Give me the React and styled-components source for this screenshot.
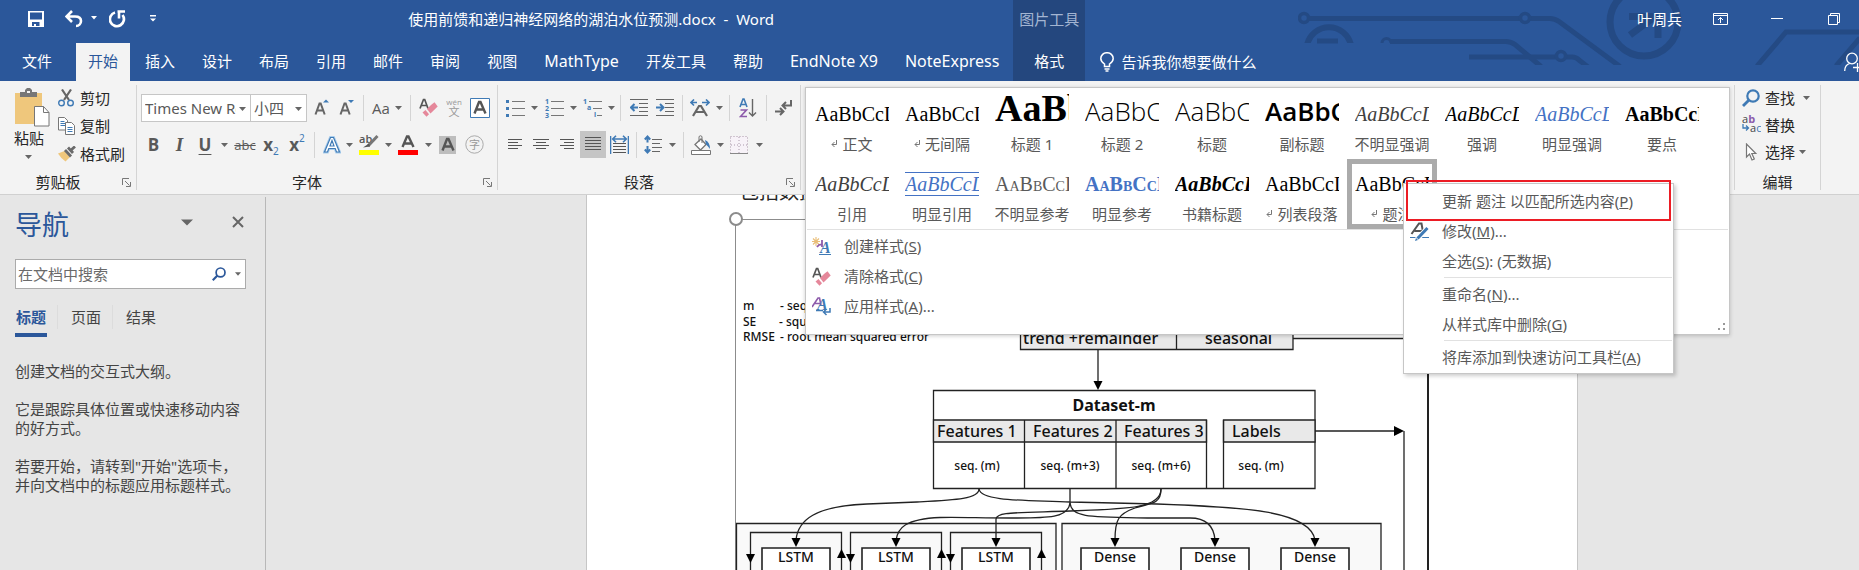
import React from "react";
import styled, { createGlobalStyle, css } from "styled-components";

const ui = '"Noto Sans", "Noto Sans CJK SC", sans-serif';
const display = '"Open Sans", "Noto Sans CJK SC", sans-serif';
const serif = '"Liberation Serif", "Noto Sans CJK SC", serif';
const blue = "#2b579a";
const ink = "#262626";
const grey = "#595959";
const accent = "#3f7ab5";
const line = "#c6c6c6";

const GlobalStyle = createGlobalStyle`
  *, *::before, *::after { box-sizing: border-box; }
  body { margin: 0; font: 15px/20px ${ui}; color: ${ink}; }
  button, input, select { font: inherit; color: inherit; margin: 0; padding: 0; border: 0; background: none; border-radius: 0; }
  p, h1, h2 { margin: 0; font-weight: normal; }
  ul { margin: 0; padding: 0; list-style: none; }
  svg { display: block; flex: none; }
`;

const Shell = styled.div`
  display: flex;
  flex-direction: column;
  height: 100vh;
  overflow: hidden;
  background: #e6e6e6;
`;

/* ---------- header ---------- */

const Header = styled.header`
  position: relative;
  display: grid;
  grid-template-columns: max-content 72px 1fr;
  grid-template-rows: 43px 38px;
  background: ${blue};
  color: #fff;
  overflow: hidden;
  flex: none;
`;

const Decor = styled.svg`
  position: absolute;
  top: 0;
  right: 0;
`;

const TitleRow = styled.div`
  display: flex;
  align-items: center;
  padding: 0 0 6px 15px;
`;

const DocTitle = styled.h1`
  flex: 1;
  padding-right: 6px;
  text-align: center;
  font-size: 15px;
  white-space: pre;
`;

const ContextHeading = styled.div`
  display: flex;
  align-items: center;
  justify-content: center;
  padding-bottom: 6px;
  background: #24477e;
  color: #a3b5d2;
`;

const WindowRow = styled.div`
  position: relative;
  display: flex;
  align-items: center;
  justify-content: flex-end;
  gap: 7px;
  padding-bottom: 6px;
`;

const UserName = styled.button`
  margin-right: 6px;
`;

const WindowButton = styled.button`
  display: flex;
  justify-content: center;
  width: 50px;
`;

const Tabs = styled.nav`
  display: flex;
  gap: 3px;
  padding-right: 2px;
`;

const Tab = styled.button`
  padding: 0 12px 3px;
  font-size: ${(p) => (p.$latin ? 16 : 15)}px;
  line-height: 34px;
  white-space: nowrap;
  ${(p) => p.$file && css`padding: 0 21px 3px 22px;`}
  ${(p) => p.$active && css`background: #f3f3f3; color: ${blue};`}
  ${(p) => p.$context && css`background: #24477e;`}
`;

const TellRow = styled.div`
  position: relative;
  display: flex;
  align-items: center;
  justify-content: space-between;
  padding-left: 15px;
`;

const TellMe = styled.button`
  display: flex;
  align-items: center;
  gap: 7px;
`;

/* ---------- ribbon ---------- */

const Ribbon = styled.div`
  position: relative;
  z-index: 2;
  display: flex;
  flex: none;
  padding: 4px 38px 4px 0;
  background: #f3f3f3;
  border-bottom: 1px solid #d0d0d0;
`;

const Group = styled.section`
  position: relative;
  display: flex;
  flex-direction: column;
  justify-content: space-between;
  width: ${(p) => (p.$w ? p.$w + "px" : "auto")};
  flex: ${(p) => (p.$w ? "none" : "1")};
  height: 105px;
  border-right: 1px solid #d4d4d4;
`;

const GroupFoot = styled.div`
  display: grid;
  grid-template-columns: 1fr auto 1fr;
  align-items: center;
  padding: 0 5px;
  line-height: 16px;
`;

const Launcher = styled.button`
  grid-column: 3;
  justify-self: end;
`;

const FootLabel = styled.span`
  grid-column: 2;
  padding-right: ${(p) => (p.$offset ? 20 : 0)}px;
`;

const Rows = styled.div`
  padding: 4px 0 0 4px;
`;

const ToolRow = styled.div`
  display: flex;
  align-items: center;
  height: 37px;
`;

const Tool = styled.button`
  display: flex;
  align-items: center;
  justify-content: center;
  gap: 5px;
  flex: none;
  width: ${(p) => p.$w}px;
  height: 27px;
  color: ${grey};
  background: ${(p) => (p.$on ? "#c5c5c5" : "none")};
`;

const Bar = styled.span`
  flex: none;
  width: 1px;
  height: 26px;
  margin: 0 4px;
  background: #d4d4d4;
`;

const Glyph = styled.span`
  font-size: ${(p) => p.$size || 17}px;
  font-weight: ${(p) => (p.$bold ? 700 : 400)};
  font-style: ${(p) => (p.$italic ? "italic" : "normal")};
  font-family: ${(p) => (p.$italic ? serif : display)};
  text-decoration: ${(p) => p.$deco || "none"};
  text-underline-offset: 3px;
  line-height: 20px;
`;

const Script = styled.span`
  font-size: 10px;
  color: ${accent};
  line-height: 10px;
  align-self: ${(p) => (p.$up ? "flex-start" : "flex-end")};
`;

const ScriptTool = styled(Tool)`
  gap: 0;
  padding: 2px 0;
`;

const ComboBox = styled.label`
  position: relative;
  display: flex;
  width: ${(p) => p.$w}px;
  height: 28px;
  margin-right: ${(p) => (p.$last ? "2px" : "0")};
  background: #fff;
  border: 1px solid ${line};
  border-left-width: ${(p) => (p.$last ? "0" : "1px")};
  svg { position: absolute; right: 4px; top: 12px; pointer-events: none; }
`;

const Select = styled.select`
  appearance: none;
  flex: 1;
  min-width: 0;
  margin: 0 14px 0 3px;
  color: ${grey};
  white-space: nowrap;
  overflow: hidden;
  text-overflow: clip;
`;

const ClipBody = styled.div`
  display: flex;
`;

const Paste = styled.button`
  display: flex;
  flex-direction: column;
  align-items: center;
  gap: 1px;
  width: 50px;
  margin: 3px 2px 0 6px;
  padding-left: 2px;
`;

const PasteLabel = styled.span`
  display: flex;
  flex-direction: column;
  align-items: center;
  gap: 7px;
  margin-right: 6px;
`;

const ListTool = styled.button`
  display: flex;
  align-items: center;
  height: ${(p) => p.$h}px;
  padding-bottom: 2px;
  white-space: nowrap;
`;

const IconCell = styled.span`
  display: flex;
  width: ${(p) => p.$w || 22}px;
`;

const EditBody = styled.div`
  padding-left: 7px;
`;

const CaretCell = styled.span`
  margin-left: ${(p) => p.$gap}px;
`;

/* ---------- style gallery ---------- */

const Popup = styled.div`
  position: absolute;
  top: 2px;
  left: 4px;
  right: 4px;
  height: 248px;
  padding: 1px;
  background: #fff;
  border: 1px solid ${line};
  box-shadow: 0 1px 4px rgba(0, 0, 0, 0.2);
`;

const Gallery = styled.div`
  display: grid;
  grid-template-columns: repeat(auto-fill, 90px);
`;

const Cell = styled.div`
  position: relative;
  height: 70px;
`;

const CellButton = styled.button`
  display: block;
  width: 90px;
  height: 70px;
  padding: 4px 8px 5px;
  ${(p) => p.$on && css`box-shadow: inset 0 0 0 5px #ababab;`}
`;

const Sample = styled.span`
  display: block;
  height: 40px;
  overflow: hidden;
  text-align: left;
  white-space: nowrap;
  font: 20px/40px ${serif};
  color: #000;
`;

const SampleText = styled.span`
  line-height: 0;
  font-family: ${(p) => (p.$sans ? display : serif)};
  font-size: ${(p) => p.$size || 20}px;
  font-weight: ${(p) => p.$weight || 400};
  font-style: ${(p) => (p.$italic ? "italic" : "normal")};
  font-variant: ${(p) => (p.$caps ? "small-caps" : "normal")};
  color: ${(p) => p.$color || "#000"};
  ${(p) => p.$ruled && css`border: solid #4472c4; border-width: 1px 0;`}
`;

const StyleName = styled.span`
  display: flex;
  justify-content: center;
  align-items: center;
  gap: 4px;
  line-height: 20px;
  color: ${grey};
  white-space: nowrap;
  margin: 0 -8px;
`;

const Actions = styled.ul`
  padding-top: 2px;
  border-top: 1px solid #e1e1e1;
`;

const MenuButton = styled.button`
  display: flex;
  align-items: center;
  width: 100%;
  height: 30px;
  padding: 0 0 2px 5px;
  color: ${grey};
  text-align: left;
  white-space: nowrap;
`;

const MenuIcon = styled.span`
  width: 32px;
`;

const Grip = styled.svg`
  position: absolute;
  right: 4px;
  bottom: 3px;
`;

const ContextMenu = styled.ul`
  position: absolute;
  z-index: 3;
  left: 56px;
  top: 24px;
  width: 271px;
  padding: 3px 1px 0;
  background: #fff;
  border: 1px solid ${line};
  box-shadow: 2px 2px 4px rgba(0, 0, 0, 0.2);
`;

const Divider = styled.li`
  height: 1px;
  margin: 0 0 2px 39px;
  background: #e1e1e1;
`;

const Callout = styled.span`
  position: absolute;
  left: 2px;
  right: 2px;
  top: -4px;
  height: 41px;
  border: 2px solid #ec1c24;
`;

/* ---------- work area ---------- */

const Body = styled.div`
  display: flex;
  flex: 1;
  min-height: 0;
`;

const NavPane = styled.aside`
  flex: none;
  width: 266px;
  margin-top: 2px;
  padding: 10px 19px 0 15px;
  border-right: 1px solid #b8b8b8;
  color: #444;
`;

const NavHead = styled.div`
  display: flex;
  align-items: center;
`;

const NavTitle = styled.h2`
  flex: 1;
  font-size: 27px;
  line-height: 36px;
  color: ${blue};
`;

const NavHeadButtons = styled.div`
  display: flex;
  align-items: center;
  gap: 39px;
  padding: 0 2px 6px 0;
`;

const SearchBox = styled.div`
  display: flex;
  align-items: center;
  gap: 9px;
  height: 30px;
  margin-top: 16px;
  padding: 0 4px 0 2px;
  background: #fff;
  border: 1px solid #ababab;
`;

const SearchInput = styled.input`
  flex: 1;
  min-width: 0;
  outline: none;
  &::placeholder { color: #6a6a6a; opacity: 1; }
`;

const NavTabs = styled.div`
  display: flex;
  margin-top: 14px;
`;

const NavTab = styled.button`
  padding: 0 1px 2px;
  line-height: 28px;
  border-bottom: 4px solid ${(p) => (p.$on ? blue : "transparent")};
  color: ${(p) => (p.$on ? blue : "#444")};
  font-weight: ${(p) => (p.$on ? 700 : 400)};
`;

const NavRule = styled.span`
  width: 1px;
  height: 24px;
  margin: 2px 12px 0 10px;
  background: #dcdcdc;
`;

const NavText = styled.div`
  display: grid;
  gap: 19px;
  margin-top: 25px;
  line-height: 19px;
`;

const Canvas = styled.main`
  display: flex;
  justify-content: center;
  flex: 1;
  min-width: 0;
  padding-left: 39px;
  overflow: hidden;
`;

const Page = styled.article`
  flex: none;
  width: 992px;
  overflow: hidden;
  background: #fff;
  border: solid ${line};
  border-width: 0 1px;
`;

const Paragraph = styled.p`
  margin-top: -13px;
  padding-left: 152px;
  font: 20px/20px ${serif};
`;

const Figure = styled.svg`
  margin-left: 141px;
  font-family: ${ui};
  fill: #111;
`;

/* ---------- icons ---------- */

const Caret = ({ c = "#666", w = 7 }) => (
  <svg width={w} height="4" viewBox="0 0 7 4"><path d="M0 0h7L3.5 4z" fill={c} /></svg>
);

const LauncherIcon = () => (
  <svg width="9" height="9" viewBox="0 0 9 9" fill="none" stroke="#777">
    <path d="M.5 7V.5H7M3 3l4.500 4.500M8.500 4v4.500H4" />
  </svg>
);

const Lines = ({ rows, w = 18, h = 18 }) => (
  <svg width={w} height={h} viewBox={`0 0 ${w} ${h}`} fill="none" stroke="#555">
    {rows.map(([x1, x2, y]) => <path key={`${x1}-${y}`} d={`M${x1} ${y}.5H${x2}`} />)}
  </svg>
);

const Eraser = () => (
  <svg width="19" height="19" viewBox="0 0 19 19">
    <path d="M1 10.500 4.500 1.500h1.200L9 10.500M2.300 7.500h5.200" fill="none" stroke="#555" strokeWidth="1.700" />
    <path d="M12 7 15.500 4.200 18.700 8.500 11.500 15.500 8 11z" fill="#e5879a" />
    <path d="M3.500 14.500 6.500 12l3.500 4.300L7.500 18.700z" fill="#e5879a" />
  </svg>
);

const Magnifier = ({ s = 18, c = accent }) => (
  <svg width={s} height={s} viewBox="0 0 18 18" fill="none" stroke={c} strokeWidth="2.200">
    <circle cx="11" cy="7" r="5.700" /><path d="M7 11 1 17" strokeWidth="2.800" />
  </svg>
);

const SaveIcon = () => (
  <svg width="16" height="16" viewBox="0 0 16 16">
    <path fillRule="evenodd" fill="#fff" d="M0 0h16v16H0zM2 1.500v7h12v-7zM4 11v4h2v-2h2v2h3.500v-4z" />
  </svg>
);

const UndoIcon = () => (
  <svg width="32" height="18" viewBox="0 0 32 18">
    <path d="M7 1 1.500 6.500 7 12M2 6.500h8c4 0 6 2 6 4.500s-2 5-5 5" fill="none" stroke="#fff" strokeWidth="2.600" />
    <path d="M26 6h6l-3 3.500z" fill="#fff" />
  </svg>
);

const RedoIcon = () => (
  <svg width="17" height="18" viewBox="0 0 17 18">
    <path d="M6 2.500A7 7 0 1 0 13.500 5" fill="none" stroke="#fff" strokeWidth="2.700" />
    <path d="M8.500 1.500H16M10 1v7.500" fill="none" stroke="#fff" strokeWidth="2.600" />
  </svg>
);

const ItalicA = ({ x, y, c, s = 13 }) => (
  <text x={x} y={y} fill={c} fontSize={s} fontWeight="700" fontStyle="italic" fontFamily="Liberation Serif">A</text>
);

const HeaderDecor = () => (
  <Decor width="561" height="65" viewBox="1298 0 561 65" fill="none" stroke="#244a84" strokeWidth="5" aria-hidden="true">
    <circle cx="1304" cy="18" r="4.500" strokeWidth="3.500" />
    <path d="M1309 18.500h211M1530 18.500h20q5 0 9 3l61 45" />
    <circle cx="1525" cy="18" r="4.500" strokeWidth="3.500" />
    <path d="M1307 45a22.500 22.500 0 0 1 44 0" strokeWidth="6" clipPath="url(#top)" />
    <path d="M1317 41h21" />
    <path d="M1382 43a4.500 4.500 0 0 1 9 0" strokeWidth="3" />
    <path d="M1390 41.500h116q5 0 9 3l26 22" />
    <path d="M1469 57h87M1566 57h6q4 0 7 3l9 7" />
    <circle cx="1561" cy="56" r="4.500" strokeWidth="3.500" />
    <circle cx="1644" cy="22" r="34" strokeWidth="7" />
    <path d="M1629 16.500h33M1658 13v25M1630 35l27-20" strokeWidth="7" />
    <path d="M1757 66l29-34h73M1836 66l24-28" />
    <clipPath id="top"><path d="M1298 0h80v43h-80z" /></clipPath>
  </Decor>
);

const PasteIcon = () => (
  <svg width="35" height="39" viewBox="0 0 35 39">
    <path d="M0 5h27v31H0z" fill="#efc77c" />
    <path d="M5 4h5V2l2-2h3l2 2v2h5v5H5z" fill="#777" /><path d="M12 3h3v2h-3z" fill="#f3f3f3" />
    <path d="M19.500 18.500h9l5.500 6v13.500H19.500z" fill="#fff" stroke="#777" />
    <path d="M28.500 18.500v6H34" fill="none" stroke="#777" />
  </svg>
);

const CutIcon = () => (
  <svg width="17" height="18" viewBox="0 0 17 18" fill="none">
    <path d="M4 0.500 11 11M13 .500 6 11" stroke="#666" strokeWidth="2.200" />
    <circle cx="3.500" cy="14" r="2.800" stroke={accent} strokeWidth="1.400" /><circle cx="12.500" cy="14" r="2.800" stroke={accent} strokeWidth="1.400" />
  </svg>
);

const CopyIcon = () => (
  <svg width="18" height="18" viewBox="0 0 18 18" fill="#fff" stroke="#777">
    <path d="M.5.5h6l3 3v9.500h-9z" /><path d="M2.500 4.500h4M2.500 6.500h5M2.500 8.500h5" stroke={accent} />
    <path d="M7.500 5.500h6l3 3v9h-9z" /><path d="M9.500 10.500h5M9.500 12.500h5M9.500 14.500h5" stroke={accent} />
  </svg>
);

const BrushIcon = () => (
  <svg width="18" height="16" viewBox="0 0 18 16">
    <path d="M0 7.500 6.500 5l5.500 6-4.500 4.500Q3 12.500 0 7.500z" fill="#efc77c" />
    <path d="M7 4 13 10.500M10 1.500 15 7M12 5 17 0.500" stroke="#6a6a6a" strokeWidth="2.800" fill="none" />
  </svg>
);

const GrowIcon = ({ down }) => (
  <svg width="15" height="17" viewBox="0 0 15 17">
    <path d="M1.500 15.500 5.500 4.500h1.200l4 11M3 11.500h6.500" fill="none" stroke="#666" strokeWidth="2" />
    <path d={down ? "M9 1h6l-3 3z" : "M9 3.500h6l-3-3z"} fill={accent} />
  </svg>
);

const GlowA = () => (
  <svg width="18" height="20" viewBox="0 0 18 20">
    <path d="M1.500 17 7.500 2.500h3L16.500 17h-3l-1.300-3.500H5.800L4.500 17z" fill="#fff" stroke="#a9cdec" strokeWidth="3" />
    <path d="M1.500 17 7.500 2.500h3L16.500 17h-3l-1.300-3.500H5.800L4.500 17zM7 11h4L9 5.500z" fill="#fff" stroke={accent} strokeWidth="1.200" />
  </svg>
);

const HighlightIcon = () => (
  <svg width="20" height="21" viewBox="0 0 20 21">
    <text x="0" y="9" fontSize="11" fontFamily="Open Sans" fontWeight="600" fill="#555">ab</text>
    <path d="M18.500 2 9 12" stroke="#777" strokeWidth="3" /><path d="M4 13.500l6-4 1 3z" fill="#555" />
    <path d="M0 16h20v5H0z" fill="#ff0" />
  </svg>
);

const FontColorIcon = () => (
  <svg width="20" height="20" viewBox="0 0 20 20">
    <path d="M4.500 12 9 1.500h1.500L15.500 12M6 8.500h8" fill="none" stroke="#555" strokeWidth="2.400" />
    <path d="M0 15h20v5H0z" fill="red" />
  </svg>
);

const BoxedA = ({ shade }) => (
  <svg width={shade ? 17 : 20} height={shade ? 18 : 20} viewBox={shade ? "1 1 17 18" : "0 0 20 20"}>
    {shade ? <path d="M0 0h20v20H0z" fill="#bdbdbd" /> : <path d="M.5.5h19v19H.5z" fill="#fff" stroke={accent} />}
    <path d="M4.500 15.500 9 4h1.500l5 11.500M6.300 11.500h7.400" fill="none" stroke="#555" strokeWidth="2.400" />
  </svg>
);

const PinyinIcon = () => (
  <svg width="16" height="20" viewBox="0 0 16 20" fill="#999">
    <text x="8" y="7" fontSize="8" textAnchor="middle" fontFamily="Open Sans">wén</text>
    <text x="8" y="18" fontSize="11" textAnchor="middle" fontFamily="Noto Sans CJK SC">文</text>
  </svg>
);

const CircledIcon = () => (
  <svg width="19" height="19" viewBox="0 0 19 19">
    <circle cx="9.500" cy="9.500" r="8.700" fill="none" stroke="#aaa" />
    <text x="9.500" y="13.500" fontSize="11" textAnchor="middle" fill="#999" fontFamily="Noto Sans CJK SC">字</text>
  </svg>
);

const BulletIcon = () => (
  <svg width="19" height="18" viewBox="0 0 19 18">
    <path d="M6 2.500h13M6 9.500h13M6 16.500h13" stroke="#777" />
    <path d="M0 1h3v3H0zM0 8h3v3H0zM0 15h3v3H0z" fill={accent} />
  </svg>
);

const NumberIcon = ({ multi }) => (
  <svg width="19" height="20" viewBox="0 0 19 20" fontFamily="Open Sans" fontSize="7" fontWeight="700" fill={accent}>
    {multi ? (
      <><path d="M6 3.500h13M10 10.500h9M14 17.500h5" stroke="#777" />
        <text x="0" y="6">1</text><text x="4" y="12">a</text><text x="11" y="19">i</text></>
    ) : (
      <><path d="M6 3.500h13M6 10.500h13M6 17.500h13" stroke="#777" />
        <text x="0" y="6">1</text><text x="0" y="13">2</text><text x="0" y="20">3</text></>
    )}
  </svg>
);

const IndentIcon = ({ inward }) => (
  <svg width="18" height="17" viewBox="0 0 18 17" fill="none">
    <path d="M0 .5h18M9 4.500h9M9 8.500h9M9 12.500h9M0 16.500h18" stroke="#666" />
    <path d={inward ? "M0 8.500h7M4 5l3.500 3.500L4 12" : "M1 8.500h7M4.500 5 1 8.500 4.500 12"} stroke={accent} strokeWidth="2" />
  </svg>
);

const ScaleIcon = () => (
  <svg width="20" height="18" viewBox="0 0 20 18" fill="none">
    <path d="M3 17 9 7h2l6 10M5.500 13h9" stroke="#666" strokeWidth="2.200" />
    <path d="M1 3.500h6M12 3.500h7M4 .5l-3 3 3 3M16 .5l3 3-3 3" stroke={accent} strokeWidth="1.600" />
  </svg>
);

const SortIcon = () => (
  <svg width="18" height="20" viewBox="0 0 18 20" fill="none">
    <path d="M1 9 4 1h1l3 8M2 6.500h5" stroke={accent} strokeWidth="1.600" />
    <path d="M1.500 12h6l-6 6.500h6.500" stroke="#8d5bab" strokeWidth="1.600" />
    <path d="M13.500 1v17M10 14.500l3.500 3.500 3.500-3.500" stroke="#666" strokeWidth="1.400" />
  </svg>
);

const MarkIcon = () => (
  <svg width="17" height="16" viewBox="0 0 17 16" fill="none" stroke="#666" strokeWidth="2">
    <path d="M16 0v5.500H8M11 2 7.500 5.500 11 9M0 11.500h8M5 8l3.500 3.500L5 15" />
  </svg>
);

const DistributeIcon = () => (
  <svg width="19" height="20" viewBox="0 0 19 20" fill="none">
    <path d="M.5 1v18M18.500 1v18M3 4h13M6 .8 2.700 4 6 7.200M13 .8 16.300 4 13 7.200" stroke={accent} strokeWidth="1.600" />
    <path d="M3 8.500h13M3 11.500h13M3 14.500h13M3 17.500h13" stroke="#555" />
  </svg>
);

const SpacingIcon = () => (
  <svg width="18" height="19" viewBox="0 0 18 19" fill="none">
    <path d="M3.500 1.500v6M3.500 11v6.500M.8 4.500l2.700-3 2.700 3M.8 14.500l2.700 3 2.700-3" stroke={accent} strokeWidth="2" />
    <path d="M8 4.500h10M8 8.500h8M8 12.500h10M8 16.500h8" stroke="#666" />
  </svg>
);

const BucketIcon = () => (
  <svg width="20" height="20" viewBox="0 0 20 20" fill="none">
    <path d="M4 9.500 10 4l5 5.500L9.500 15z" fill="#fff" stroke="#777" strokeWidth="1.300" /><path d="M8 7V1.500q1.500-1.500 3 0V8" stroke="#777" />
    <path d="M14 5q5 2 5 9-2-3-4-4.500z" fill={accent} />
    <path d="M.5 15.500h19v4H.5z" fill="#fff" stroke="#777" />
  </svg>
);

const BordersIcon = () => (
  <svg width="18" height="18" viewBox="0 0 18 18" fill="none">
    <path d="M.5.500h17v17H.5zM9 1v16M1 9h16" fill="#f7f2f8" stroke="#aa99ab" strokeDasharray="1 2" /><path d="M0 17.500h18" stroke="#888" />
  </svg>
);

const ReplaceIcon = () => (
  <svg width="19" height="19" viewBox="0 0 19 19" fontFamily="Open Sans" fontSize="11" fill="#444">
    <text x="0" y="8">a<tspan fill="#8d5bab" fontWeight="700">b</tspan></text>
    <text x="8" y="17">a<tspan fill={accent}>c</tspan></text>
    <path d="M1 9v4h5M4 10.500 6.500 13 4 15.500" fill="none" stroke={accent} strokeWidth="1.300" />
  </svg>
);

const PointerIcon = () => (
  <svg width="19" height="18" viewBox="0 0 19 18" fill="#fff" stroke="#777" strokeWidth="1.200">
    <path d="M4.500 1v13l3-3 2.500 6 2.300-1-2.500-5.500h4z" />
  </svg>
);

const ReturnMark = () => (
  <svg width="7" height="8" viewBox="0 0 7 8" fill="none" stroke="#777">
    <path d="M5.500 0v4.500H1M3.500 2 1 4.500 3.500 7" />
  </svg>
);

const NewStyleIcon = () => (
  <svg width="19" height="19" viewBox="0 0 19 19">
    <path d="M4 0v9M0 4.500h8M1 1.500l6 6M7 1.500l-6 6" stroke="#e9bd77" strokeWidth="1.100" />
    <path d="M10 3v7M5 10q2-3 5-2.500" stroke="#8d5bab" strokeWidth="1.800" fill="none" />
    <ItalicA x="8" y="15.500" c={accent} s={16} /><path d="M7 17.500h12" stroke={accent} />
  </svg>
);

const ApplyStyleIcon = () => (
  <svg width="19" height="19" viewBox="0 0 19 19">
    <path d="M0 10 6 1h1.500L9 8M3 6.500h5" stroke="#8d5bab" strokeWidth="1.600" fill="none" />
    <ItalicA x="5" y="12.500" c={accent} s={16} /><path d="M4 13.500h7M18 11v4h-6M14.500 12 11.500 15l3 3" stroke={accent} strokeWidth="1.500" fill="none" />
  </svg>
);

const ModifyIcon = () => (
  <svg width="19" height="19" viewBox="0 0 19 19">
    <path d="M1.500 12 9 1.500h2.500L13 10M4.500 9h8" stroke="#555" strokeWidth="2" fill="none" />
    <path d="M0 15.500h19" stroke={accent} /><path d="M17.500 6 7 17.500" stroke="#fff" strokeWidth="5" /><path d="M17.500 6 7.500 16.500" stroke={accent} strokeWidth="3" /><path d="M5 19l1-3 2 2z" fill={accent} />
  </svg>
);

/* ---------- data ---------- */

const tabs = ["插入", "设计", "布局", "引用", "邮件", "审阅", "视图", "MathType", "开发工具", "帮助", "EndNote X9", "NoteExpress"];

const styles = [
  { name: "正文", mark: true },
  { name: "无间隔", mark: true },
  { name: "标题 1", size: 38, weight: 700 },
  { name: "标题 2", size: 26, weight: 300, sans: true },
  { name: "标题", size: 26, weight: 300, sans: true },
  { name: "副标题", size: 26, weight: 600, sans: true },
  { name: "不明显强调", italic: true, color: "#404040" },
  { name: "强调", italic: true },
  { name: "明显强调", italic: true, color: "#4472c4" },
  { name: "要点", weight: 700 },
  { name: "引用", italic: true, color: "#404040" },
  { name: "明显引用", italic: true, color: "#4472c4", ruled: true },
  { name: "不明显参考", caps: true, color: "#5a5a5a" },
  { name: "明显参考", caps: true, weight: 700, color: "#4472c4" },
  { name: "书籍标题", italic: true, weight: 700 },
  { name: "列表段落", mark: true },
  { name: "题注", mark: true, selected: true },
];

/* ---------- diagram ---------- */

const Arrow = ({ x, y, dir = "down" }) => {
  const d = {
    down: `M${x - 4.5} ${y - 9}h9L${x} ${y}z`,
    up: `M${x - 4.5} ${y + 9}h9L${x} ${y}z`,
    right: `M${x - 10} ${y - 5}v10L${x} ${y}z`,
  }[dir];
  return <path d={d} fill="#000" />;
};

const Diagram = () => (
  <Figure width="849" height="368" viewBox="728 202 849 368" role="img" aria-label="Dataset diagram">
    <g fill="none" stroke="#8c8c8c">
      <path d="M735.500 570V219.500H1577" />
      <circle cx="736" cy="219" r="6" fill="#fff" strokeWidth="2" />
    </g>
    <g fontSize="12" fontWeight="500">
      <text x="743" y="310">m</text><text x="780" y="310">- seq</text>
      <text x="743" y="326">SE</text><text x="779" y="326">- squ</text>
      <text x="743" y="341">RMSE</text><text x="780" y="341">- root mean squared error</text>
    </g>
    <g fill="#e9e9e9" stroke="#222" strokeWidth="1.300">
      <path d="M1020.500 320.500h156V349.500h-156zM1176.500 320.500h116.500V349.500h-116.500z" />
      <path d="M736.500 523.500h319.500V600H736.500zM1062 523.500h319V600h-319z" fill="#f9f9f9" />
      <path d="M933.500 390.500h381.500V488.500H933.500z" fill="#fff" />
      <path d="M933.500 420h273v22h-273zM1223.500 420h91.500v22h-91.500z" />
      <path d="M1024.500 420v68M1116 420v68M1206.500 420v68M1223.500 420v68" fill="none" />
    </g>
    <g fontSize="16" fontWeight="500">
      <text x="1023" y="344">trend +remainder</text><text x="1205" y="344">seasonal</text>
      <text x="937" y="437">Features 1</text><text x="1033" y="437">Features 2</text>
      <text x="1124" y="437">Features 3</text><text x="1232" y="437">Labels</text>
    </g>
    <text x="1114" y="411" fontSize="16" fontWeight="700" textAnchor="middle">Dataset-m</text>
    <g fontSize="12" fontWeight="500" textAnchor="middle">
      <text x="977" y="470">seq. (m)</text><text x="1070" y="470">seq. (m+3)</text>
      <text x="1161" y="470">seq. (m+6)</text><text x="1261" y="470">seq. (m)</text>
    </g>
    <g fill="none" stroke="#222" strokeWidth="1.300">
      <path d="M1098 349v34M1293 338.500h135M1315 431h80M1404 431v140" />
      <path d="M1428 338v234" strokeWidth="2" />
      <path d="M979 489C979 499 955 500 917 502L867 504C815 506 798 520 796 540" />
      <path d="M979 489C981 502 1030 500 1070 502L1157 504C1240 507 1310 510 1315 540" />
      <path d="M1070 489V503C1068 519 1045 518 1010 518C980 518 960 517 940 517.500C905 519 898 528 896 540" />
      <path d="M1070 503C1072 518 1090 517 1150 518L1190 518C1208 518 1214 528 1215 540" />
      <path d="M1161 489C1161 506 1148 503 1135 508C1118 514 1115 520 1115 540" />
      <path d="M1161 489C1161 508 1130 509 1070 511C1010 513 997 512 996 519V540" />
    </g>
    <Arrow x={1098} y={390} /><Arrow x={1404} y={431} dir="right" />
    {[796, 896, 996].map((x) => (
      <g key={x}>
        <path d={`M${x - 45.5} 570V532.5h91V570`} fill="none" stroke="#222" strokeWidth="1.300" />
        <Arrow x={x - 45.5} y={563} /><Arrow x={x + 45.5} y={549} dir="up" />
      </g>
    ))}
    {[796, 896, 996, 1115, 1215, 1315].map((x, i) => (
      <g key={x}>
        <Arrow x={x} y={547} />
        <path d={`M${x - 34} 548h68v40h-68z`} fill="#fff" stroke="#222" strokeWidth="1.600" />
        <text x={x} y="562" fontSize="14" fontWeight="500" textAnchor="middle">{i < 3 ? "LSTM" : "Dense"}</text>
      </g>
    ))}
  </Figure>
);

/* ---------- parts ---------- */

const IconTool = ({ w, label, on, children }) => (
  <Tool $w={w} $on={on} aria-label={label}>{children}</Tool>
);

const Foot = ({ label, launcher, offset }) => (
  <GroupFoot>
    <FootLabel $offset={offset}>{label}</FootLabel>
    {launcher && <Launcher aria-label={`${label}设置`}><LauncherIcon /></Launcher>}
  </GroupFoot>
);

const Item = ({ icon, text, keyName, tail, children }) => (
  <li>
    <MenuButton>
      <MenuIcon>{icon}</MenuIcon>
      <span>{text}(<u>{keyName}</u>){tail}</span>
      {children}
    </MenuButton>
  </li>
);

const StyleMenu = () => (
  <ContextMenu>
    <Item text="更新 题注 以匹配所选内容" keyName="P"><Callout /></Item>
    <Item icon={<ModifyIcon />} text="修改" keyName="M" tail="..." />
    <Item text="全选" keyName="S" tail=": (无数据)" />
    <Divider />
    <Item text="重命名" keyName="N" tail="..." />
    <Item text="从样式库中删除" keyName="G" />
    <Divider />
    <Item text="将库添加到快速访问工具栏" keyName="A" />
  </ContextMenu>
);

export default function App() {
  return (
    <Shell>
      <GlobalStyle />
      <Header>
        <HeaderDecor />
        <TitleRow>
          <Tool $w={42} aria-label="保存"><SaveIcon /></Tool>
          <Tool $w={48} aria-label="撤消"><UndoIcon /></Tool>
          <Tool $w={25} aria-label="重复"><RedoIcon /></Tool>
          <Tool $w={45} aria-label="自定义快速访问工具栏">
            <svg width="6" height="7" viewBox="0 0 6 7"><path d="M0 0h6v1.500H0zM0 3.500h6L3 6.500z" fill="#fff" /></svg>
          </Tool>
          <DocTitle>使用前馈和递归神经网络的湖泊水位预测.docx  -  Word</DocTitle>
        </TitleRow>
        <ContextHeading>图片工具</ContextHeading>
        <WindowRow>
          <UserName>叶周兵</UserName>
          <WindowButton aria-label="功能区显示选项">
            <svg width="15" height="12" viewBox="0 0 15 12" fill="none" stroke="#fff"><path d="M.5.5h14v11H.5zM.5 2.500h14M7.500 10V4.500M5 7l2.500-2.500L10 7" /></svg>
          </WindowButton>
          <WindowButton aria-label="最小化">
            <svg width="12" height="2" viewBox="0 0 12 2"><path d="M0 0h12v1H0z" fill="#fff" /></svg>
          </WindowButton>
          <WindowButton aria-label="向下还原">
            <svg width="12" height="12" viewBox="0 0 12 12" fill="none" stroke="#fff"><path d="M.5 2.500h9v9h-9zM2.500 2.500v-2h9v9h-2" /></svg>
          </WindowButton>
        </WindowRow>
        <Tabs>
          <Tab $file>文件</Tab>
          <Tab $active>开始</Tab>
          {tabs.map((t) => <Tab key={t} $latin={/^[A-Z]/.test(t)}>{t}</Tab>)}
        </Tabs>
        <Tab $context>格式</Tab>
        <TellRow>
          <TellMe>
            <svg width="14" height="20" viewBox="0 0 14 20" fill="none" stroke="#fff" strokeWidth="1.500">
              <path d="M4.500 14.500V12Q.8 9.500.8 6.500a6.200 5.800 0 0 1 12.400 0q0 3-3.700 5.500v2.500zM4.500 17h5M5.500 19h3" />
            </svg>
            告诉我你想要做什么
          </TellMe>
          <button aria-label="共享">
            <svg width="15" height="20" viewBox="0 0 15 20" fill="none" stroke="#fff" strokeWidth="1.300">
              <circle cx="8" cy="6.500" r="5.300" /><path d="M.7 19q0-6 5-7.500M9 15.500h6M13.500 11v9" />
            </svg>
          </button>
        </TellRow>
      </Header>

      <Ribbon>
        <Group $w={137}>
          <ClipBody>
            <Paste>
              <PasteIcon />
              <PasteLabel>粘贴<Caret /></PasteLabel>
            </Paste>
            <div>
              <ListTool $h={28}><IconCell><CutIcon /></IconCell>剪切</ListTool>
              <ListTool $h={28}><IconCell><CopyIcon /></IconCell>复制</ListTool>
              <ListTool $h={28}><IconCell><BrushIcon /></IconCell>格式刷</ListTool>
            </div>
          </ClipBody>
          <Foot label="剪贴板" launcher offset />
        </Group>

        <Group $w={361}>
          <Rows>
            <ToolRow>
              <ComboBox $w={110}>
                <Select aria-label="字体"><option>Times New Roman</option></Select><Caret />
              </ComboBox>
              <ComboBox $w={56} $last>
                <Select aria-label="字号"><option>小四</option></Select><Caret />
              </ComboBox>
              <IconTool w={25} label="增大字号"><GrowIcon /></IconTool>
              <IconTool w={25} label="减小字号"><GrowIcon down /></IconTool>
              <Bar />
              <IconTool w={38} label="更改大小写"><Glyph $size={15}>Aa</Glyph><Caret /></IconTool>
              <Bar />
              <IconTool w={27} label="清除所有格式"><Eraser /></IconTool>
              <IconTool w={23} label="拼音指南"><PinyinIcon /></IconTool>
              <IconTool w={30} label="字符边框"><BoxedA /></IconTool>
            </ToolRow>
            <ToolRow>
              <IconTool w={25} label="加粗"><Glyph $size={17} $bold>B</Glyph></IconTool>
              <IconTool w={27} label="倾斜"><Glyph $size={19} $bold $italic>I</Glyph></IconTool>
              <IconTool w={24} label="下划线"><Glyph $size={17} $bold $deco="underline">U</Glyph></IconTool>
              <IconTool w={15} label="下划线选项"><Caret /></IconTool>
              <IconTool w={26} label="删除线"><Glyph $size={13} $deco="line-through">abc</Glyph></IconTool>
              <ScriptTool $w={26} aria-label="下标"><Glyph $size={17} $bold>x</Glyph><Script>2</Script></ScriptTool>
              <ScriptTool $w={26} aria-label="上标"><Glyph $size={17} $bold>x</Glyph><Script $up>2</Script></ScriptTool>
              <Bar />
              <IconTool w={25} label="文本效果"><GlowA /></IconTool>
              <IconTool w={10} label="文本效果选项"><Caret /></IconTool>
              <IconTool w={30} label="突出显示"><HighlightIcon /></IconTool>
              <IconTool w={9} label="突出显示选项"><Caret /></IconTool>
              <IconTool w={30} label="字体颜色"><FontColorIcon /></IconTool>
              <IconTool w={10} label="字体颜色选项"><Caret /></IconTool>
              <IconTool w={28} label="字符底纹"><BoxedA shade /></IconTool>
              <IconTool w={26} label="带圈字符"><CircledIcon /></IconTool>
            </ToolRow>
          </Rows>
          <Foot label="字体" launcher offset />
        </Group>

        <Group $w={303}>
          <Rows>
            <ToolRow>
              <IconTool w={26} label="项目符号"><BulletIcon /></IconTool>
              <IconTool w={12} label="项目符号选项"><Caret /></IconTool>
              <IconTool w={28} label="编号"><NumberIcon /></IconTool>
              <IconTool w={10} label="编号选项"><Caret /></IconTool>
              <IconTool w={28} label="多级列表"><NumberIcon multi /></IconTool>
              <IconTool w={10} label="多级列表选项"><Caret /></IconTool>
              <Bar />
              <IconTool w={27} label="减少缩进量"><IndentIcon /></IconTool>
              <IconTool w={26} label="增加缩进量"><IndentIcon inward /></IconTool>
              <Bar />
              <IconTool w={26} label="中文版式"><ScaleIcon /></IconTool>
              <IconTool w={12} label="中文版式选项"><Caret /></IconTool>
              <Bar />
              <IconTool w={28} label="排序"><SortIcon /></IconTool>
              <Bar />
              <IconTool w={24} label="显示编辑标记"><MarkIcon /></IconTool>
            </ToolRow>
            <ToolRow>
              <IconTool w={26} label="左对齐"><Lines w={14} h={13} rows={[[0, 14, 1], [0, 10, 4], [0, 14, 7], [0, 10, 10]]} /></IconTool>
              <IconTool w={26} label="居中"><Lines w={16} h={13} rows={[[0, 16, 1], [3, 13, 4], [0, 16, 7], [3, 13, 10]]} /></IconTool>
              <IconTool w={26} label="右对齐"><Lines w={14} h={13} rows={[[0, 14, 1], [4, 14, 4], [0, 14, 7], [4, 14, 10]]} /></IconTool>
              <IconTool w={26} label="两端对齐" on><Lines w={16} h={15} rows={[[0, 16, 0], [0, 16, 3], [0, 16, 6], [0, 16, 9], [0, 16, 12]]} /></IconTool>
              <IconTool w={26} label="分散对齐"><DistributeIcon /></IconTool>
              <Bar />
              <IconTool w={24} label="行和段落间距"><SpacingIcon /></IconTool>
              <IconTool w={14} label="间距选项"><Caret /></IconTool>
              <Bar />
              <IconTool w={26} label="底纹"><BucketIcon /></IconTool>
              <IconTool w={12} label="底纹选项"><Caret /></IconTool>
              <IconTool w={26} label="边框"><BordersIcon /></IconTool>
              <IconTool w={14} label="边框选项"><Caret /></IconTool>
            </ToolRow>
          </Rows>
          <Foot label="段落" launcher offset />
        </Group>

        <Group>
          <Popup>
            <Gallery>
              {styles.map((s) => (
                <Cell key={s.name}>
                  <CellButton $on={s.selected}>
                    <Sample>
                      <SampleText $size={s.size} $weight={s.weight} $sans={s.sans} $italic={s.italic} $caps={s.caps} $color={s.color} $ruled={s.ruled}>
                        AaBbCcDd
                      </SampleText>
                    </Sample>
                    <StyleName>{s.mark && <ReturnMark />}{s.name}</StyleName>
                  </CellButton>
                  {s.selected && <StyleMenu />}
                </Cell>
              ))}
            </Gallery>
            <Actions>
              <Item icon={<NewStyleIcon />} text="创建样式" keyName="S" />
              <Item icon={<Eraser />} text="清除格式" keyName="C" />
              <Item icon={<ApplyStyleIcon />} text="应用样式" keyName="A" tail="..." />
            </Actions>
            <Grip width="8" height="8" viewBox="0 0 8 8" fill="#999">
              <path d="M6 0h2v2H6zM6 5h2v2H6zM1 5h2v2H1z" />
            </Grip>
          </Popup>
        </Group>

        <Group $w={86}>
          <EditBody>
            <ListTool $h={27}><IconCell $w={23}><Magnifier /></IconCell>查找<CaretCell $gap={8}><Caret /></CaretCell></ListTool>
            <ListTool $h={27}><IconCell $w={23}><ReplaceIcon /></IconCell>替换</ListTool>
            <ListTool $h={27}><IconCell $w={23}><PointerIcon /></IconCell>选择<CaretCell $gap={4}><Caret /></CaretCell></ListTool>
          </EditBody>
          <Foot label="编辑" />
        </Group>
      </Ribbon>

      <Body>
        <NavPane>
          <NavHead>
            <NavTitle>导航</NavTitle>
            <NavHeadButtons>
              <button aria-label="任务窗格选项"><svg width="12" height="7" viewBox="0 0 12 7"><path d="M0 .5h12l-6 6z" fill="#666" /></svg></button>
              <button aria-label="关闭"><svg width="12" height="12" viewBox="0 0 12 12"><path d="M1 1l10 10M11 1 1 11" stroke="#666" strokeWidth="2" /></svg></button>
            </NavHeadButtons>
          </NavHead>
          <SearchBox>
            <SearchInput aria-label="在文档中搜索" placeholder="在文档中搜索" />
            <button aria-label="搜索"><Magnifier s={14} c={blue} /></button>
            <button aria-label="搜索选项"><Caret w={6} /></button>
          </SearchBox>
          <NavTabs>
            <NavTab $on>标题</NavTab><NavRule />
            <NavTab>页面</NavTab><NavRule />
            <NavTab>结果</NavTab>
          </NavTabs>
          <NavText>
            <p>创建文档的交互式大纲。</p>
            <p>它是跟踪具体位置或快速移动内容的好方式。</p>
            <p>若要开始，请转到"开始"选项卡，并向文档中的标题应用标题样式。</p>
          </NavText>
        </NavPane>
        <Canvas>
          <Page>
            <Paragraph>包括数据</Paragraph>
            <Diagram />
          </Page>
        </Canvas>
      </Body>
    </Shell>
  );
}
